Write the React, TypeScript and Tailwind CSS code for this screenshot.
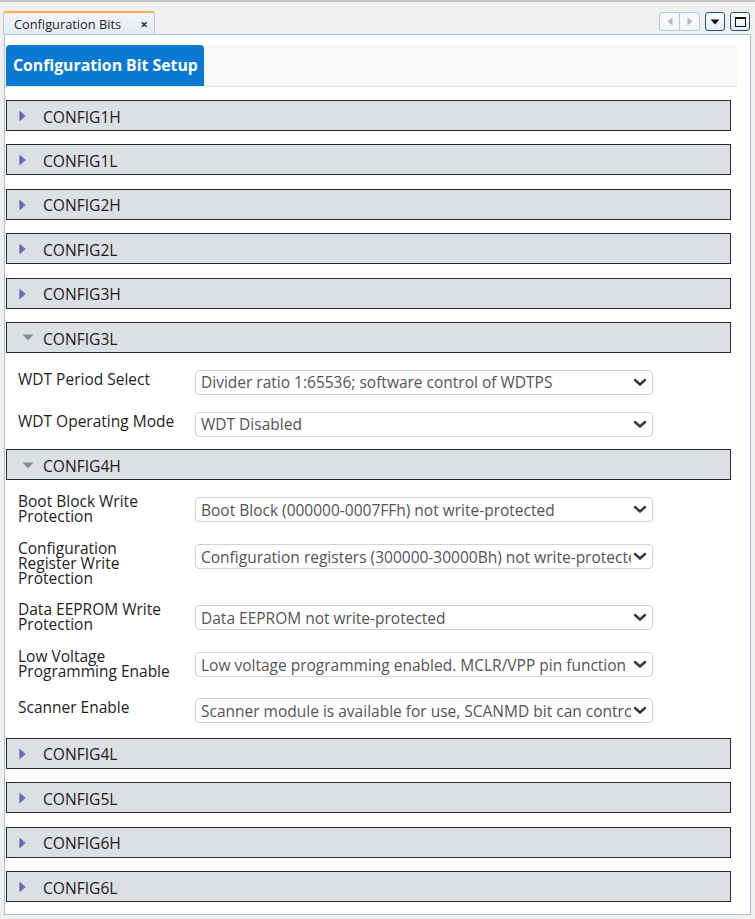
import React from "react";

function Collapsed() {
  return (
    <svg width="9" height="12" viewBox="0 0 9 12" className="shrink-0">
      <defs>
        <linearGradient id="tg" x1="0" y1="0" x2="1" y2="0">
          <stop offset="0" stopColor="#5656a8" />
          <stop offset="1" stopColor="#8a8ad0" />
        </linearGradient>
      </defs>
      <polygon points="1.5,0.8 8,6 1.5,11.2" fill="url(#tg)" />
    </svg>
  );
}

function Expanded() {
  return (
    <svg width="12" height="7" viewBox="0 0 12 7" className="shrink-0">
      <polygon points="0.5,0.5 11.5,0.5 6,6.5" fill="#8c8c8c" />
    </svg>
  );
}

function Chevron() {
  return (
    <svg width="14" height="9" viewBox="0 0 14 9" className="shrink-0">
      <polyline points="2,2 7,6.5 12,2" fill="none" stroke="#383838" strokeWidth="2.4" strokeLinecap="round" strokeLinejoin="round" />
    </svg>
  );
}

function Header({ title, open }: { title: string; open?: boolean }) {
  return (
    <div className="box-border flex h-[31px] w-[725px] items-center border border-[#2a2a2a] bg-[#dcdfe3] text-[15.6px] text-[#1c1c1c]">
      <div className="flex w-[36px] justify-center pl-[2px] pt-[1px]">
        {open ? <span className="ml-[4px]"><Expanded /></span> : <span className="mr-[8px]"><Collapsed /></span>}
      </div>
      <span className="pt-[4px] leading-none">{title}</span>
    </div>
  );
}

function Select({ value }: { value: string }) {
  return (
    <div className="box-border flex h-[25px] w-[458px] shrink-0 items-center rounded-[4px] border border-[#d2d2d2] bg-white pl-[5px] pr-[4px]">
      <span className="flex-1 overflow-hidden whitespace-nowrap pt-[1px] text-[15.5px] leading-[23px] text-[#545454]">{value}</span>
      <span className="flex w-[17px] justify-center"><Chevron /></span>
    </div>
  );
}

type Row = { lines: string[]; value: string; h: number };

function Rows({ rows }: { rows: Row[] }) {
  return (
    <div className="flex flex-col pl-[12px]">
      {rows.map((r, i) => (
        <div key={i} className="flex items-start" style={{ height: r.h }}>
          <div
            className={
              "w-[177px] shrink-0 text-[15.5px] leading-[15px] text-[#1e1e1e] " +
              (r.lines.length > 1 ? "-mt-[3px]" : "mt-[2px]")
            }
          >
            {r.lines.map((l, j) => (
              <div key={j} className="whitespace-nowrap">{l}</div>
            ))}
          </div>
          <Select value={r.value} />
        </div>
      ))}
    </div>
  );
}

export default function App() {
  const cfg3l: Row[] = [
    { lines: ["WDT Period Select"], value: "Divider ratio 1:65536; software control of WDTPS", h: 42 },
    { lines: ["WDT Operating Mode"], value: "WDT Disabled", h: 25 },
  ];
  const cfg4h: Row[] = [
    { lines: ["Boot Block Write", "Protection"], value: "Boot Block (000000-0007FFh) not write-protected", h: 47 },
    { lines: ["Configuration", "Register Write", "Protection"], value: "Configuration registers (300000-30000Bh) not write-protected", h: 61 },
    { lines: ["Data EEPROM Write", "Protection"], value: "Data EEPROM not write-protected", h: 47 },
    { lines: ["Low Voltage", "Programming Enable"], value: "Low voltage programming enabled. MCLR/VPP pin function is MCLR.", h: 46 },
    { lines: ["Scanner Enable"], value: "Scanner module is available for use, SCANMD bit can control the module", h: 25 },
  ];

  return (
    <div className="box-border h-[919px] w-[755px] overflow-hidden border-t-2 border-[#c4c4c4] bg-[#f0f0f0] font-['Open_Sans','Noto_Sans',sans-serif]">
      {/* title bar */}
      <div className="flex h-[32px] items-start">
        <div className="ml-[3px] mt-[9px] box-border flex h-[23px] w-[152px] items-center rounded-t-[3px] border-x border-t-2 border-x-[#b9c4d6] border-t-[#f2b34c] bg-gradient-to-b from-[#f3f5fb] to-[#e4e9f4] pl-[10px] pr-[6px] pt-[2px]">
          <span className="flex-1 text-[12.8px] leading-none text-[#1e1e1e]">Configuration Bits</span>
          <span className="text-[13px] font-bold leading-none text-[#2a2a2a]">×</span>
        </div>
        <div className="flex-1" />
        <div className="mr-[5px] mt-[10px] flex items-center gap-[5px]">
          <div className="box-border flex h-[19px] w-[41px] rounded-[3px] border border-[#b4c6de] bg-[#f5f7fb]">
            <div className="flex flex-1 items-center justify-center border-r border-[#b4c6de]">
              <svg width="6" height="9" viewBox="0 0 6 9"><polygon points="5.5,0.5 0.5,4.5 5.5,8.5" fill="#b8b8b8" /></svg>
            </div>
            <div className="flex flex-1 items-center justify-center">
              <svg width="6" height="9" viewBox="0 0 6 9"><polygon points="0.5,0.5 5.5,4.5 0.5,8.5" fill="#b8b8b8" /></svg>
            </div>
          </div>
          <div className="box-border flex h-[19px] w-[20px] items-center justify-center rounded-[3px] border-[1.5px] border-[#2c4c7c] bg-gradient-to-b from-white to-[#e6ecf5]">
            <svg width="10" height="6" viewBox="0 0 10 6"><polygon points="0.5,0.5 9.5,0.5 5,5.5" fill="#111" /></svg>
          </div>
          <div className="box-border flex h-[19px] w-[20px] items-center justify-center rounded-[3px] border-[1.5px] border-[#2c4c7c] bg-gradient-to-b from-white to-[#e6ecf5]">
            <div className="box-border h-[10px] w-[11px] border-[1.5px] border-t-[2.5px] border-[#111]" />
          </div>
        </div>
      </div>

      {/* panel */}
      <div className="ml-[4px] box-border h-[881px] w-[747px] border border-[#a9bfdc] bg-white">
        <div className="mt-[10px] ml-[1px] flex h-[42px] w-[731px] items-end border-b border-[#e4e7ec] bg-[#f7f8fa]">
          <div className="flex h-[41px] w-[198px] items-center rounded-t-[4px] bg-[#0a79d4] pl-[7px]">
            <span className="text-[15.8px] font-bold leading-none text-white">Configuration Bit Setup</span>
          </div>
        </div>

        <div className="ml-[1px] mt-[13px] flex flex-col gap-[13.4px]">
          <Header title="CONFIG1H" />
          <Header title="CONFIG1L" />
          <Header title="CONFIG2H" />
          <Header title="CONFIG2L" />
          <Header title="CONFIG3H" />
          <div className="flex flex-col">
            <Header title="CONFIG3L" open />
            <div className="box-border h-[83px] pt-[17px]">
              <Rows rows={cfg3l} />
            </div>
          </div>
          <div className="flex flex-col">
            <Header title="CONFIG4H" open />
            <div className="box-border h-[244px] pt-[17px]">
              <Rows rows={cfg4h} />
            </div>
          </div>
          <Header title="CONFIG4L" />
          <Header title="CONFIG5L" />
          <Header title="CONFIG6H" />
          <Header title="CONFIG6L" />
        </div>
      </div>
    </div>
  );
}
